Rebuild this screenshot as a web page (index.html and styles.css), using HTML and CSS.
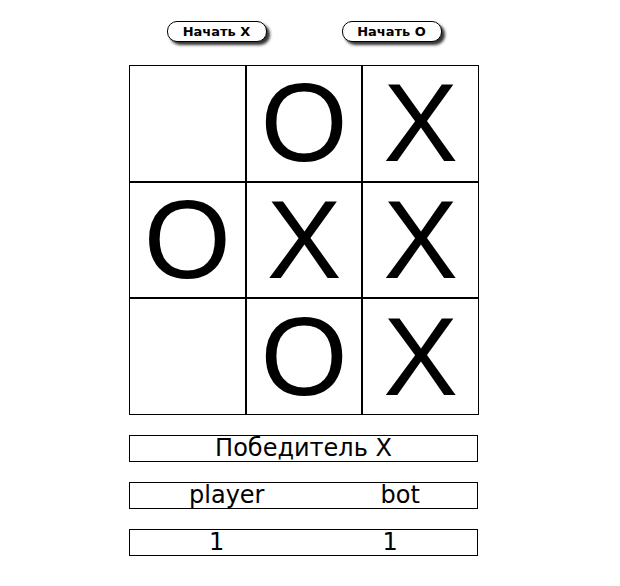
FILE: index.html
```html
<!DOCTYPE html>
<html>
<head>
<meta charset="utf-8">
<link rel="stylesheet" href="styles.css">
</head>
<body>
<div class="game">
  <div class="controls">
    <div class="half"><button class="start">Начать X</button></div>
    <div class="half"><button class="start">Начать O</button></div>
  </div>
  <div class="board">
    <div class="cell"></div>
    <div class="cell">O</div>
    <div class="cell">X</div>
    <div class="cell">O</div>
    <div class="cell">X</div>
    <div class="cell">X</div>
    <div class="cell"></div>
    <div class="cell">O</div>
    <div class="cell">X</div>
  </div>
  <div class="info winner">Победитель X</div>
  <div class="info names"><span class="half">player</span><span class="half">bot</span></div>
  <div class="info score"><span class="half">1</span><span class="half">1</span></div>
</div>
</body>
</html>
```
FILE: styles.css
```css
html, body {
  margin: 0;
  padding: 0;
  background: #fff;
}
body {
  padding: 8px;
}
.game {
  width: 350px;
  margin-left: 121px;
  font-family: "DejaVu Sans", Verdana, sans-serif;
  color: #000;
}
.controls {
  display: flex;
  padding-top: 13px;
  height: 21px;
}
.half {
  flex: 1;
  display: flex;
  justify-content: center;
}
.start {
  width: 100px;
  height: 21px;
  padding: 0;
  border: 1.5px solid #000;
  border-radius: 10px;
  background: #fff;
  box-shadow: 3px 3px 3px #333;
  font-family: "DejaVu Sans", Verdana, sans-serif;
  font-weight: bold;
  font-size: 13px;
  color: #000;
}
.board {
  display: grid;
  grid-template-columns: repeat(3, 1fr);
  grid-template-rows: repeat(3, 1fr);
  height: 350px;
  margin-top: 23px;
}
.cell {
  border: 1px solid #000;
  display: flex;
  align-items: center;
  justify-content: center;
  font-family: "Liberation Sans", Arial, sans-serif;
  font-size: 112px;
  line-height: 1;
}
.info {
  border: 1px solid #000;
  height: 25px;
  width: 347px;
  margin-top: 20px;
  font-size: 24px;
  line-height: 25px;
  display: flex;
}
.board + .info {
  margin-top: 20px;
}
.winner {
  justify-content: center;
}
.names .half {
  justify-content: center;
  padding-left: 20px;
}
.score .half {
  justify-content: center;
}
```
